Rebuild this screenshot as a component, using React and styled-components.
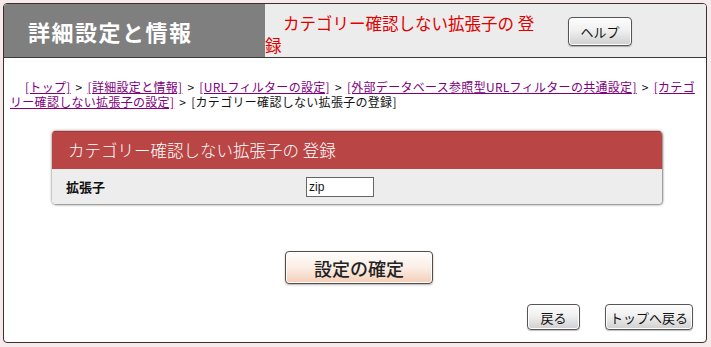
import React from "react";
import styled, { createGlobalStyle } from "styled-components";

const GlobalStyle = createGlobalStyle`
  body {
    margin: 0;
    background: #f6eaea;
    font-family: "Noto Sans CJK JP", "Liberation Sans", sans-serif;
  }
`;

const crumbs = [
  "[トップ]",
  "[詳細設定と情報]",
  "[URLフィルターの設定]",
  "[外部データベース参照型URLフィルターの共通設定]",
  "[カテゴリー確認しない拡張子の設定]",
];

const App = () => {
  return (
    <>
      <GlobalStyle />
      <Frame>
        <Header>
          <TitleBlock>詳細設定と情報</TitleBlock>
          <PageTitle>カテゴリー確認しない拡張子の 登録</PageTitle>
          <HelpButton>ヘルプ</HelpButton>
        </Header>

        <Breadcrumb>
          {crumbs.map((c) => (
            <React.Fragment key={c}>
              <a href="#">{c}</a> &gt;{" "}
            </React.Fragment>
          ))}
          [カテゴリー確認しない拡張子の登録]
        </Breadcrumb>

        <Panel>
          <PanelHead>カテゴリー確認しない拡張子の 登録</PanelHead>
          <PanelRow>
            <Label>拡張子</Label>
            <TextInput defaultValue="zip" />
          </PanelRow>
        </Panel>

        <SubmitWrap>
          <SubmitButton>設定の確定</SubmitButton>
        </SubmitWrap>

        <BottomBar>
          <GrayButton $width={53}>戻る</GrayButton>
          <GrayButton $width={88}>トップへ戻る</GrayButton>
        </BottomBar>
      </Frame>
    </>
  );
};

const Frame = styled.div`
  margin: 3px;
  width: 702px;
  height: 338px;
  border: 1px solid #3a3232;
  border-radius: 4px;
  background: #fff;
  overflow: hidden;
  display: flex;
  flex-direction: column;
`;

const Header = styled.div`
  display: flex;
  align-items: flex-start;
  height: 53px;
  background: #ececec;
  border-bottom: 1px solid #3a3a3a;
`;

const TitleBlock = styled.div`
  width: 237px;
  height: 53px;
  padding-left: 24px;
  background: #7f7f7f;
  color: #fff;
  font-size: 22px;
  font-weight: bold;
  line-height: 55px;
  letter-spacing: 1.5px;
`;

const PageTitle = styled.div`
  width: 282px;
  margin-top: 8px;
  text-indent: 18px;
  color: #e00000;
  font-size: 16.5px;
  line-height: 22px;
`;

const GrayButton = styled.button`
  width: ${(p) => p.$width}px;
  height: 26px;
  padding: 0;
  border: 1px solid #555;
  border-radius: 4px;
  background: linear-gradient(#fdfdfd 0%, #f0f0f0 45%, #cfcfcf 100%);
  box-shadow: inset 0 0 0 1px #fff, 0 1px 1px rgba(0, 0, 0, 0.25);
  color: #111;
  font-family: "Noto Sans CJK JP", sans-serif;
  font-size: 13px;
  line-height: 1;
`;

const HelpButton = styled(GrayButton)`
  width: 64px;
  height: 29px;
  margin: 13px 0 0 21px;
`;

const Breadcrumb = styled.div`
  margin-top: 21px;
  padding: 0 10px 0 6px;
  text-indent: 15px;
  font-size: 12px;
  line-height: 15px;
  color: #111;
  word-spacing: 2px;
  letter-spacing: 0.3px;

  a {
    color: #800080;
    text-decoration: underline;
  }
`;

const Panel = styled.div`
  margin: 22px 0 0 48px;
  width: 610px;
  border-radius: 4px;
  overflow: hidden;
  box-shadow: 0 0 3px rgba(0, 0, 0, 0.55), 1px 1px 2px rgba(0, 0, 0, 0.3);
`;

const PanelHead = styled.div`
  height: 38px;
  padding-left: 16px;
  background: #b94545;
  border-top: 1px solid #a33;
  box-sizing: border-box;
  color: #fff;
  font-size: 16.5px;
  font-weight: 300;
  line-height: 37px;
`;

const PanelRow = styled.div`
  display: flex;
  align-items: center;
  height: 35px;
  padding-left: 14px;
  background: #ededed;
`;

const Label = styled.div`
  width: 240px;
  font-size: 13px;
  font-weight: bold;
  color: #111;
`;

const TextInput = styled.input`
  width: 62px;
  height: 16px;
  padding: 1px 2px;
  border: 1px solid #666;
  border-radius: 0;
  background: #fff;
  font-family: "Liberation Sans", sans-serif;
  font-size: 12px;
  color: #111;
`;

const SubmitWrap = styled.div`
  margin-top: 47px;
  display: flex;
  justify-content: center;
  padding-left: 8px;
`;

const SubmitButton = styled.button`
  width: 148px;
  height: 33px;
  padding: 0;
  border: 1px solid #5a4a44;
  border-radius: 4px;
  background: linear-gradient(#fffdfb 0%, #fbeee6 50%, #f3cdb5 100%);
  box-shadow: inset 0 0 0 1px #fff, 0 1px 2px rgba(0, 0, 0, 0.3);
  color: #222;
  font-family: "Noto Sans CJK JP", sans-serif;
  font-size: 18px;
  font-weight: 500;
`;

const BottomBar = styled.div`
  margin-top: 20px;
  display: flex;
  justify-content: flex-end;
  gap: 25px;
  padding-right: 13px;
`;

export default App;
